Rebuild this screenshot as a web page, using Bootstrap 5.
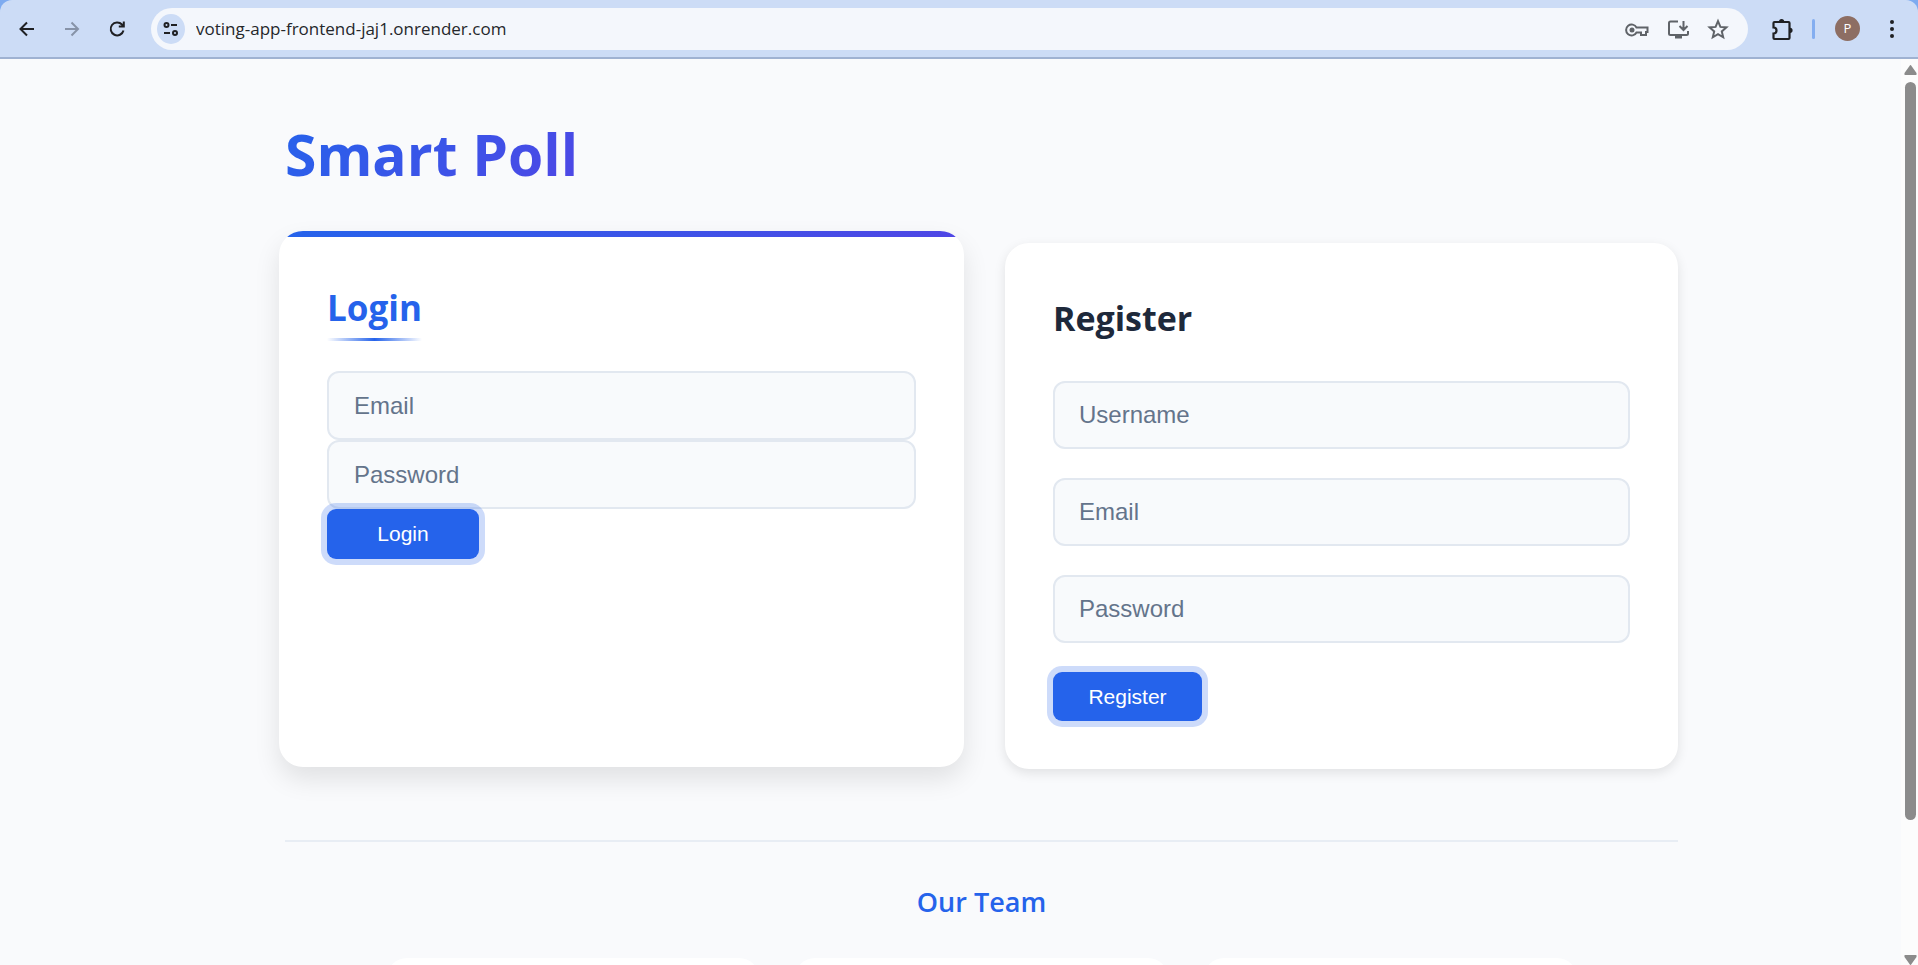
<!DOCTYPE html>
<html lang="en">
<head>
<meta charset="utf-8">
<meta name="viewport" content="width=device-width, initial-scale=1">
<title>Smart Poll</title>
<link rel="stylesheet" href="https://cdn.jsdelivr.net/npm/bootstrap@5.3.0/dist/css/bootstrap.min.css">
<style>
  :root { --brand: #2563eb; --brand-2: #4f46e5; --page: #f9fafc; --line: #e2e8f0; }
  body { font-family: "Open Sans", "Noto Sans", sans-serif; background: var(--page); color: #1e293b; }

  /* Browser toolbar */
  .chrome-wrap { background: #7eabf0; }
  .chrome-bar { background: #ccdcf6; height: 59px; border-bottom: 2px solid #9fb2d2; border-radius: 12px 12px 0 0; padding: 0 16px 0 17px; }
  .chrome-btn { padding: 0; border: 0; background: none; color: #1f2023; line-height: 0; }
  .chrome-btn:disabled { color: #8793a8; }
  .reload-btn { margin-left: 20px; }
  .ext-btn { margin-left: 22px; }
  .omnibox { height: 42px; border-radius: 21px; background: #f4f7fc; padding: 0 18px 0 6px; margin-left: 22px; }
  .site-info { width: 28px; height: 30px; border-radius: 50%; background: #ccdcf6; display: grid; place-items: center; }
  .url-field { border: 0; background: none; outline: 0; font-size: 17px; color: #25272b; padding: 0; margin-left: 11px; min-width: 0; }
  .muted-icon { color: #5f6368; }
  .tool-split { width: 3px; height: 20px; border-radius: 2px; background: #84aef0; margin: 0 20px 0 18px; }
  .avatar { width: 25px; height: 25px; border-radius: 50%; background: #8d6e63; color: #fff; font-size: 13px; line-height: 25px; }

  /* Page */
  .page-body { padding: 55px 223px 0 285px; }
  .brand-title { font-size: 57px; line-height: 80px; font-weight: 700; margin: 0 0 49px; background: linear-gradient(135deg, var(--brand), var(--brand-2)); -webkit-background-clip: text; background-clip: text; color: transparent; }
  .form-row { --bs-gutter-x: 47px; }
  .auth-card { border: 0; border-radius: 24px; padding: 48px; box-shadow: 0 4px 12px rgba(0, 0, 0, .1); }
  .auth-card h2 { font-size: 34px; line-height: 54px; font-weight: 700; margin: 0 0 36px; }
  .auth-input { font: 24px "Liberation Sans", Arial, sans-serif; height: 68px; padding: 0 24px; border: 2px solid var(--line); border-radius: 12px; background: #f8fafc; }
  .auth-input::placeholder { color: #64748b; }
  .auth-btn { font: 21px "Liberation Sans", Arial, sans-serif; height: 49px; width: 149px; padding: 0; border: 0; border-radius: 9px; background: var(--brand); color: #fff; box-shadow: 0 0 0 6px rgba(37, 99, 235, .23); }
  .register-card form { gap: 29px; }

  /* The active card is slightly larger and carries the accent bar */
  .login-card { margin: -12px -6px 2px; padding-top: 50px; overflow: hidden; box-shadow: 0 12px 26px rgba(0, 0, 0, .1); }
  .login-card::before { content: ""; position: absolute; inset: 0 0 auto; height: 6px; background: linear-gradient(135deg, var(--brand), var(--brand-2)); }
  .login-card h2 { font-size: 35px; color: var(--brand); margin-bottom: 30px; align-self: flex-start; }
  .login-card h2::after { content: ""; display: block; height: 3px; margin-top: 3px; background: linear-gradient(90deg, transparent, var(--brand), transparent); }
  .login-card .auth-input { height: 69px; padding: 0 25px; }
  .login-card .auth-btn { height: 50px; width: 152px; }

  .team-area { margin-top: 71px; border-top: 2px solid #e8edf4; padding-top: 38px; }
  .team-area h2 { font-size: 27px; line-height: 44px; font-weight: 600; color: var(--brand); margin: 0 0 34px; }
  .team-grid { max-width: 1190px; gap: 36px; }
  .team-card { border: 0; border-radius: 20px; height: 240px; }

  /* Scroll track */
  .scroll-rail { width: 17px; background: #fcfcfc; color: #8b8b8b; padding: 6px 1px 0 3px; }
  .scroll-thumb { width: 11px; height: 82%; border-radius: 6px; background: #8b8b8b; margin: 7px 0 auto 1px; }
  @media (max-width: 1200px) { .page-body { padding-left: 32px; padding-right: 32px; } }
</style>
<script src="https://cdn.jsdelivr.net/npm/bootstrap@5.3.0/dist/js/bootstrap.bundle.min.js"></script>
</head>
<body>
<div class="vh-100 d-flex flex-column overflow-hidden">
  <header class="chrome-wrap flex-shrink-0">
    <div class="chrome-bar d-flex align-items-center">
      <button class="chrome-btn" type="button" aria-label="Back"><svg width="22" height="22" viewBox="0 0 22 22" fill="none" stroke="currentColor" stroke-width="2"><path d="M17 11H3.500M10 4.500 3.500 11l6.500 6.500"/></svg></button>
      <button class="chrome-btn ms-4" type="button" aria-label="Forward" disabled><svg width="22" height="22" viewBox="0 0 22 22" fill="none" stroke="currentColor" stroke-width="2"><path d="M2 11h13M8.500 4.500 15 11l-6.500 6.500"/></svg></button>
      <button class="chrome-btn reload-btn" type="button" aria-label="Reload"><svg width="24" height="22" viewBox="0 0 24 22" fill="none" stroke="currentColor" stroke-width="2"><path d="M18.500 12.500a6.500 6.500 0 1 1-1.500-6l2 2M18.800 3.500v5h-5"/></svg></button>
      <div class="omnibox d-flex align-items-center flex-grow-1">
        <span class="site-info flex-shrink-0"><svg width="18" height="18" viewBox="0 0 18 18" fill="none" stroke="#1f2023" stroke-width="2"><circle cx="4.500" cy="5" r="2"/><path d="M9 5h6M2 13h6"/><circle cx="13" cy="13" r="2"/></svg></span>
        <input class="url-field flex-grow-1" type="text" aria-label="Address" value="voting-app-frontend-jaj1.onrender.com">
        <button class="chrome-btn muted-icon" type="button" aria-label="Passwords"><svg width="26" height="24" viewBox="0 0 26 24" fill="none" stroke="currentColor" stroke-width="2"><path d="M12.500 9.500A5.500 5.500 0 1 0 12.500 14.500H17V17h5v-3h1.500V9.500z" transform="translate(0 1)"/><circle cx="8" cy="13" r="2.500" fill="currentColor" stroke="none"/></svg></button>
        <button class="chrome-btn muted-icon ms-3" type="button" aria-label="Install app"><svg width="24" height="24" viewBox="0 0 24 24" fill="none" stroke="currentColor" stroke-width="2"><path d="M12 4.500H4.500Q3 4.500 3 6v10.500Q3 18 4.500 18h16Q22 18 22 16.500v-2.500M17.500 4v9M13.500 9l4 4 4-4"/><path d="M9 20h7" stroke-width="3"/></svg></button>
        <button class="chrome-btn muted-icon ms-3" type="button" aria-label="Bookmark"><svg width="24" height="24" viewBox="0 0 24 24" fill="none" stroke="currentColor" stroke-width="2"><path d="m12 4.200 2.400 5.700 6 .5-4.600 4 1.400 5.900-5.200-3.100-5.200 3.100 1.400-5.900-4.600-4 6-.5z"/></svg></button>
      </div>
      <button class="chrome-btn ext-btn flex-shrink-0" type="button" aria-label="Extensions"><svg width="24" height="24" viewBox="0 0 24 24"><path d="M4.500 5h14q1 0 1 1v15q0 1-1 1h-14q-1 0-1-1v-4.500a3 3 0 0 0 0-6V6q0-1 1-1z" fill="none" stroke="currentColor" stroke-width="2.200"/><path d="M9 4.500a2.600 2.600 0 0 1 5.200 0zM20 10.700a2.600 2.600 0 0 1 0 5.200z" fill="currentColor"/></svg></button>
      <span class="tool-split flex-shrink-0"></span>
      <button class="chrome-btn avatar text-center flex-shrink-0" type="button" aria-label="Profile P">P</button>
      <button class="chrome-btn ms-4 flex-shrink-0" type="button" aria-label="Menu"><svg width="18" height="20" viewBox="0 0 18 20" fill="currentColor"><circle cx="8" cy="3" r="2"/><circle cx="8" cy="10" r="2"/><circle cx="8" cy="17" r="2"/></svg></button>
    </div>
  </header>

  <div class="d-flex flex-grow-1 overflow-hidden">
    <main class="page-body flex-grow-1 overflow-hidden">
      <div class="d-flex"><h1 class="brand-title">Smart Poll</h1></div>
      <div class="row form-row">
        <div class="col-lg-6 d-flex">
          <section class="card auth-card login-card flex-grow-1">
            <h2>Login</h2>
            <form class="d-flex flex-column align-items-start">
              <input class="form-control auth-input" aria-label="Email" type="email" placeholder="Email">
              <input class="form-control auth-input" aria-label="Password" type="password" placeholder="Password">
              <button class="btn auth-btn" type="button">Login</button>
            </form>
          </section>
        </div>
        <div class="col-lg-6">
          <section class="card auth-card register-card">
            <h2>Register</h2>
            <form class="d-flex flex-column align-items-start">
              <input class="form-control auth-input" aria-label="Username" type="text" placeholder="Username">
              <input class="form-control auth-input" aria-label="Email" type="email" placeholder="Email">
              <input class="form-control auth-input" aria-label="Password" type="password" placeholder="Password">
              <button class="btn auth-btn" type="button">Register</button>
            </form>
          </section>
        </div>
      </div>
      <section class="team-area text-center">
        <h2>Our Team</h2>
        <div class="team-grid d-flex mx-auto">
          <div class="card team-card flex-fill"></div>
          <div class="card team-card flex-fill"></div>
          <div class="card team-card flex-fill"></div>
        </div>
      </section>
    </main>
    <div class="scroll-rail d-flex flex-column flex-shrink-0" aria-hidden="true">
      <svg width="13" height="10" viewBox="0 0 13 10" fill="currentColor"><path d="M6.500 0Q7 0 7.500 1L12.500 8Q13 10 12 10H1Q0 10 .5 8L5.500 1Q6 0 6.500 0z"/></svg>
      <div class="scroll-thumb"></div>
      <svg width="13" height="10" viewBox="0 0 13 10" fill="currentColor"><path d="M6.500 10Q7 10 7.500 9L12.500 2Q13 0 12 0H1Q0 0 .5 2L5.500 9Q6 10 6.500 10z"/></svg>
    </div>
  </div>
</div>
</body>
</html>
